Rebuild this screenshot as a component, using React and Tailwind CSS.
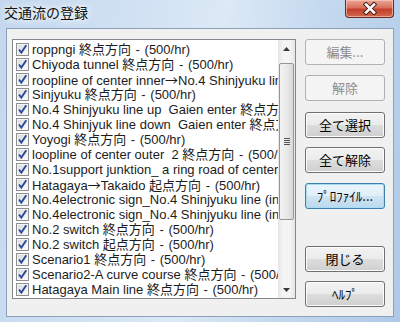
import React from "react";

const items = [
  "roppngi 終点方向 - (500/hr)",
  "Chiyoda tunnel 終点方向 - (500/hr)",
  "roopline of center inner→No.4 Shinjyuku line 終点方向 - (500/hr)",
  "Sinjyuku 終点方向 - (500/hr)",
  "No.4 Shinjyuku line up  Gaien enter 終点方向 - (500/hr)",
  "No.4 Shinjyuk line down  Gaien enter 終点方向 - (500/hr)",
  "Yoyogi 終点方向 - (500/hr)",
  "loopline of center outer  2 終点方向 - (500/hr)",
  "No.1support junktion_ a ring road of center 終点方向 - (500/hr)",
  "Hatagaya→Takaido 起点方向 - (500/hr)",
  "No.4electronic sign_No.4 Shinjyuku line (inner) 終点方向 - (500/hr)",
  "No.4electronic sign_No.4 Shinjyuku line (inner) 起点方向 - (500/hr)",
  "No.2 switch 終点方向 - (500/hr)",
  "No.2 switch 起点方向 - (500/hr)",
  "Scenario1 終点方向 - (500/hr)",
  "Scenario2-A curve course 終点方向 - (500/hr)",
  "Hatagaya Main line 終点方向 - (500/hr)",
  "Hatagaya Main line 起点方向 - (500/hr)",
];

// the old dialog font draws the dash and arrow wider than Liberation does
const Label = ({ text }) => {
  const parts = text.split(/(→| - )/);
  return (
    <span className="whitespace-pre text-[13px] leading-[15px] text-[#1c1c1c]">
      {parts.map((p, i) =>
        p === "→" ? (
          <span key={i} className="font-['Noto_Sans_CJK_JP']">→</span>
        ) : p === " - " ? (
          <span key={i} className="px-[1px]"> - </span>
        ) : (
          <span key={i}>{p}</span>
        )
      )}
    </span>
  );
};

const CheckBox = () => (
  <svg width="13" height="13" viewBox="0 0 13 13" className="shrink-0">
    <defs>
      <linearGradient id="cbg" x1="0" y1="0" x2="1" y2="1">
        <stop offset="0" stopColor="#dcdcdc" />
        <stop offset="1" stopColor="#fafafa" />
      </linearGradient>
    </defs>
    <rect x="0.5" y="0.5" width="12" height="12" fill="#f6f6f6" stroke="#8e8f8f" />
    <rect x="2" y="2" width="9" height="9" fill="url(#cbg)" />
    <path d="M3 6.5 L5.3 9.6 L10.3 2.2" stroke="#2b4a9e" strokeWidth="1.9" fill="none" />
  </svg>
);

const Button = ({ children, disabled, focused, className = "" }) => (
  <div
    className={`h-[26px] w-[80px] rounded-[3px] border flex items-center justify-center text-[13px] ${className} ${
      disabled
        ? "border-[#adb2b5] bg-[#f4f4f4] text-[#8d8d8d]"
        : focused
        ? "border-[#3c7fb1] bg-[linear-gradient(#eaf5fc_0%,#e0eef8_50%,#cfe4f3_51%,#bcd9ee_100%)] text-black shadow-[inset_0_0_0_1px_#a8dcf5]"
        : "border-[#707070] bg-[linear-gradient(#f2f2f2_0%,#ebebeb_50%,#dddddd_51%,#cfcfcf_100%)] text-black shadow-[inset_0_0_0_1px_#fcfcfc]"
    }`}
  >
    {children}
  </div>
);

export default function App() {
  return (
    <div
      className="w-[400px] h-[322px] flex flex-col bg-[linear-gradient(100deg,#c3d7ee_0%,#d3e3f4_35%,#dce9f6_50%,#c6daef_70%,#aec9e8_100%)]"
      style={{ fontFamily: '"Liberation Sans", "Noto Sans CJK JP", sans-serif' }}
    >
      <div className="h-[28px] flex items-start justify-between shrink-0">
        <div
          className="pl-[4px] pt-[3px] text-[14px] leading-[18px] text-[#111] [text-shadow:0_0_6px_#fff,0_0_10px_#fff]"
          style={{ fontFamily: '"Noto Sans CJK JP", sans-serif' }}
        >
          交通流の登録
        </div>
        <div className="mr-[6px] w-[49px] h-[18px] rounded-b-[4px] border border-t-0 border-[#6e2a22] bg-[linear-gradient(#e9a795_0%,#d8705d_45%,#c33f2a_55%,#cf6a4f_100%)] shadow-[inset_0_0_0_1px_rgba(255,210,200,0.6)] flex items-center justify-center">
          <svg width="16" height="13" viewBox="0 0 16 13">
            <path d="M4 2.5 L12 10.5 M12 2.5 L4 10.5" stroke="#3b1610" strokeWidth="4.4" strokeLinecap="square" />
            <path d="M4 2.5 L12 10.5 M12 2.5 L4 10.5" stroke="#ffffff" strokeWidth="2.6" strokeLinecap="square" />
          </svg>
        </div>
      </div>

      <div className="mx-[6px] flex-1 border border-[#8aa0bb] bg-[#f0f0f0] flex pl-[5px] pt-[10px]">
        <div className="w-[284px] h-[260px] border border-[#828790] bg-white flex">
          <div className="flex-1 overflow-hidden pt-[2px]">
            {items.map((t, i) => (
              <div key={i} className="h-[15px] flex items-center pl-[3px] gap-[3px]">
                <CheckBox />
                <Label text={t} />
              </div>
            ))}
          </div>
          <div className="w-[17px] h-full flex flex-col bg-[linear-gradient(90deg,#e6e6e6,#f4f4f4_30%,#f4f4f4_70%,#e6e6e6)]">
            <div className="h-[17px] flex items-center justify-center">
              <svg width="7" height="4" viewBox="0 0 7 4">
                <path d="M0 4 L3.5 0 L7 4 Z" fill="#3a3a3a" />
              </svg>
            </div>
            <div className="h-[6px]" />
            <div className="mx-[1px] h-[157px] rounded-[2px] border border-[#979797] bg-[linear-gradient(90deg,#f3f3f3,#e9e9e9_50%,#d9d9d9)] flex items-center justify-center">
              <div className="flex flex-col gap-[1px]">
                <div className="w-[6px] h-[1px] bg-[#555]" />
                <div className="w-[6px] h-[1px] bg-[#555]" />
                <div className="w-[6px] h-[1px] bg-[#555]" />
                <div className="w-[6px] h-[1px] bg-[#555]" />
              </div>
            </div>
            <div className="flex-1" />
            <div className="h-[17px] flex items-center justify-center">
              <svg width="7" height="4" viewBox="0 0 7 4">
                <path d="M0 0 L7 0 L3.5 4 Z" fill="#3a3a3a" />
              </svg>
            </div>
          </div>
        </div>

        <div className="ml-[9px] flex flex-col" style={{ fontFamily: '"Noto Sans CJK JP", sans-serif' }}>
          <Button disabled>編集...</Button>
          <Button disabled className="mt-[10px]">解除</Button>
          <Button className="mt-[11px]">全て選択</Button>
          <Button className="mt-[9px]">全て解除</Button>
          <Button focused className="mt-[10px]">ﾌﾟﾛﾌｧｲﾙ...</Button>
          <Button className="mt-[37px]">閉じる</Button>
          <Button className="mt-[9px]">ﾍﾙﾌﾟ</Button>
        </div>
      </div>
      <div className="h-[5px] shrink-0" />
    </div>
  );
}
